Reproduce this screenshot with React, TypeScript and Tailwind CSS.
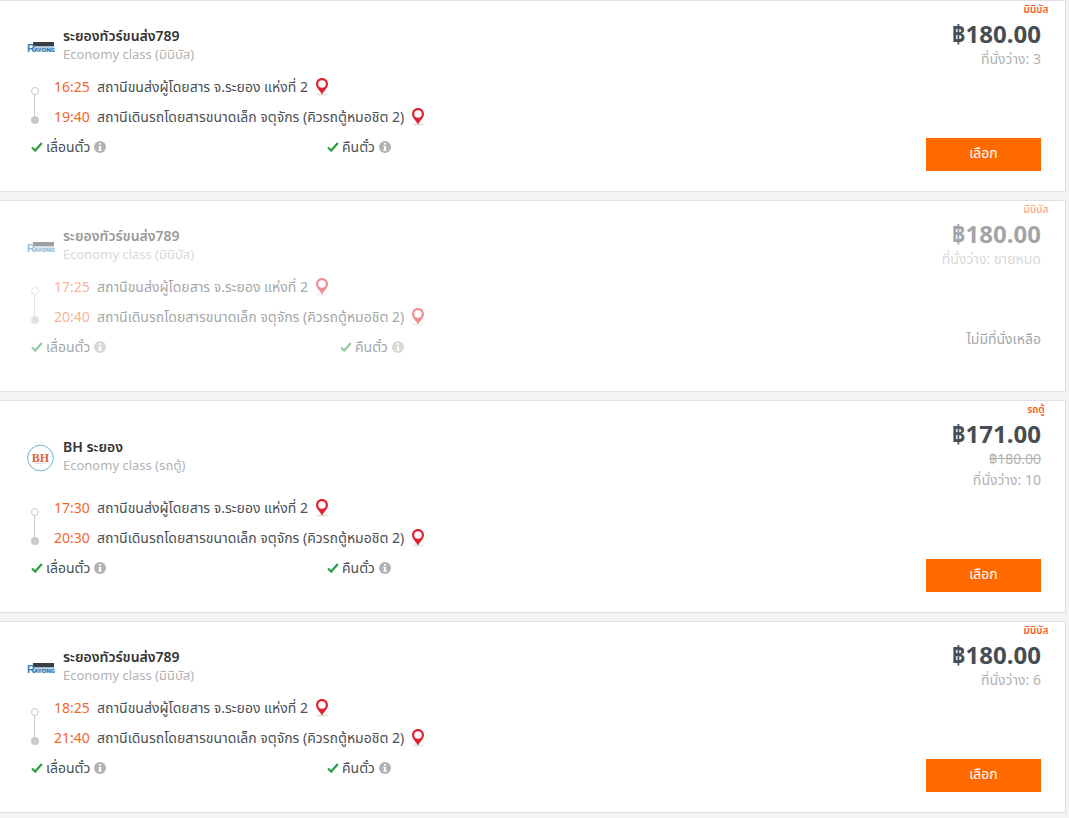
import React from "react";

interface Trip {
  id: number;
  provider: string;
  logo: "rayong" | "bh";
  vehicle: string;
  departTime: string;
  arriveTime: string;
  price: string;
  fullPrice?: string;
  seats: string;
  soldOut?: boolean;
}

const FROM_STATION = "สถานีขนส่งผู้โดยสาร จ.ระยอง แห่งที่ 2";
const TO_STATION = "สถานีเดินรถโดยสารขนาดเล็ก จตุจักร (คิวรถตู้หมอชิต 2)";

const TRIPS: Trip[] = [
  {
    id: 1,
    provider: "ระยองทัวร์ขนส่ง789",
    logo: "rayong",
    vehicle: "มินิบัส",
    departTime: "16:25",
    arriveTime: "19:40",
    price: "฿180.00",
    seats: "3",
  },
  {
    id: 2,
    provider: "ระยองทัวร์ขนส่ง789",
    logo: "rayong",
    vehicle: "มินิบัส",
    departTime: "17:25",
    arriveTime: "20:40",
    price: "฿180.00",
    seats: "ขายหมด",
    soldOut: true,
  },
  {
    id: 3,
    provider: "BH ระยอง",
    logo: "bh",
    vehicle: "รถตู้",
    departTime: "17:30",
    arriveTime: "20:30",
    price: "฿171.00",
    fullPrice: "฿180.00",
    seats: "10",
  },
  {
    id: 4,
    provider: "ระยองทัวร์ขนส่ง789",
    logo: "rayong",
    vehicle: "มินิบัส",
    departTime: "18:25",
    arriveTime: "21:40",
    price: "฿180.00",
    seats: "6",
  },
];

const RayongLogo = () => (
  <svg width="28" height="12" viewBox="0 0 28 12" role="img" aria-label="Rayong">
    <rect x="6" y="1" width="21" height="4.500" fill="#3b3f45" />
    <rect x="6" y="5.500" width="21" height="5" fill="#b4d3e8" />
    <text x="0" y="10.500" fontFamily="Liberation Sans, sans-serif" fontWeight="700" fontSize="11" fill="#2a84c4">
      R
    </text>
    <text x="7" y="10.500" fontFamily="Liberation Sans, sans-serif" fontWeight="700" fontSize="6" fill="#1d6ca8">
      AYONG
    </text>
  </svg>
);

const BhLogo = () => (
  <svg width="28" height="28" viewBox="0 0 28 28" role="img" aria-label="BH">
    <circle cx="13.500" cy="14" r="12.800" fill="#fff" stroke="#6fb3cf" />
    <text x="13.500" y="17.500" textAnchor="middle" fontFamily="Liberation Serif, serif" fontWeight="700" fontSize="12" fill="#d9663a">
      BH
    </text>
    <path d="M8 19.500h11" stroke="#d8d8d8" strokeWidth="0.800" />
  </svg>
);

const PinIcon = () => (
  <svg width="14" height="18" viewBox="0 0 14 18" aria-hidden="true">
    <ellipse cx="7" cy="16.500" rx="6" ry="1.200" fill="#e3e3e3" />
    <path
      fillRule="evenodd"
      fill="#dc2430"
      d="M7 0C3.600 0 1 2.600 1 6c0 4 4 6.600 6 10.500C9 12.600 13 10 13 6c0-3.400-2.600-6-6-6Zm0 2.200a3.800 3.800 0 1 1 0 7.600 3.800 3.800 0 0 1 0-7.600Z"
    />
  </svg>
);

const CheckIcon = () => (
  <svg width="12" height="12" viewBox="0 0 12 12" aria-hidden="true">
    <path d="M1 6.500 4.200 9.500 10.800 2" fill="none" stroke="#2f9e44" strokeWidth="2.300" />
  </svg>
);

const InfoIcon = () => (
  <svg width="12" height="12" viewBox="0 0 12 12" aria-hidden="true">
    <circle cx="6" cy="6" r="6" fill="#b2b2b2" />
    <path d="M5 2h2v1.800H5zM4.500 5H7v3.500h.7V9.800H4.300V8.500H5V6.200h-.5z" fill="#fff" />
  </svg>
);

const RouteLine = () => (
  <svg width="10" height="38" viewBox="0 0 10 38" aria-hidden="true">
    <path d="M4.500 8v22" stroke="#c9c9c9" />
    <circle cx="5" cy="5" r="3.500" fill="#fff" stroke="#c9c9c9" />
    <circle cx="5" cy="34" r="4" fill="#c9c9c9" />
  </svg>
);

const Stop = ({ time, station }: { time: string; station: string }) => (
  <li className="flex h-[30px] items-center">
    <time className="w-[43px] shrink-0 text-[#f2662b]">{time}</time>
    <span className="mr-[7px] text-[#4a4f55]">{station}</span>
    <button type="button" aria-label={`แผนที่ ${station}`} className="cursor-pointer">
      <PinIcon />
    </button>
  </li>
);

const Policy = ({ label }: { label: string }) => (
  <div className="flex items-center">
    <CheckIcon />
    <span className="ml-[3px] mr-1 text-[#4a4f55]">{label}</span>
    <button type="button" aria-label={`ข้อมูล${label}`} className="cursor-pointer">
      <InfoIcon />
    </button>
  </div>
);

const TripCard = ({ trip }: { trip: Trip }) => (
  <article className="border-y border-r border-[#dfdfdf] bg-white">
    <div className={trip.soldOut ? "opacity-50" : ""}>
      <p className="mr-3 ml-auto h-[17px] w-[34px] text-center text-[10px] leading-[17px] font-semibold text-[#fb5a1e]">
        {trip.vehicle}
      </p>

      {/* Provider and price */}
      <div className="flex items-stretch justify-between pr-6 pl-[27px]">
        <div className="flex items-center">
          <div className="w-9 pt-1">
            {trip.logo === "rayong" ? <RayongLogo /> : <BhLogo />}
          </div>
          <div>
            <h2 className="leading-[18px] font-semibold text-[#333]">{trip.provider}</h2>
            <p className="text-[13px] leading-[18px] text-[#b2b2b2]">
              Economy class ({trip.vehicle})
            </p>
          </div>
        </div>
        <div className="pt-0.5 pb-[3px] text-right leading-[21px] text-[#b2b2b2]">
          <p className="text-2xl leading-7 font-bold text-[#474d54]">{trip.price}</p>
          {trip.fullPrice && <del className="block">{trip.fullPrice}</del>}
          <p>ที่นั่งว่าง: {trip.seats}</p>
        </div>
      </div>

      {/* Route and booking */}
      <div className="flex justify-between pr-6 pb-5 pl-[30px]">
        <div>
          <div className="flex">
            <div className="w-6 pt-[14px]">
              <RouteLine />
            </div>
            <ul>
              <Stop time={trip.departTime} station={FROM_STATION} />
              <Stop time={trip.arriveTime} station={TO_STATION} />
            </ul>
          </div>
          <div className="flex h-[30px] items-center pl-px">
            <div className={trip.soldOut ? "w-[309px]" : "w-[296px]"}>
              <Policy label="เลื่อนตั๋ว" />
            </div>
            <Policy label="คืนตั๋ว" />
          </div>
        </div>
        <div className="flex h-[99px] items-end">
          {trip.soldOut ? (
            <p className="h-[42px] text-[#4a4f55]">ไม่มีที่นั่งเหลือ</p>
          ) : (
            <button
              type="button"
              className="h-[33px] w-[115px] cursor-pointer bg-[#ff6a00] pb-[3px] text-white hover:bg-[#e65f00]"
            >
              เลือก
            </button>
          )}
        </div>
      </div>
    </div>
  </article>
);

export default function App() {
  return (
    <main className="flex min-h-screen flex-col gap-2 bg-[#f4f4f4] pr-[3px] font-['Noto_Sans','Noto_Sans_Thai',sans-serif] text-sm">
      {TRIPS.map((trip) => (
        <TripCard key={trip.id} trip={trip} />
      ))}
    </main>
  );
}
